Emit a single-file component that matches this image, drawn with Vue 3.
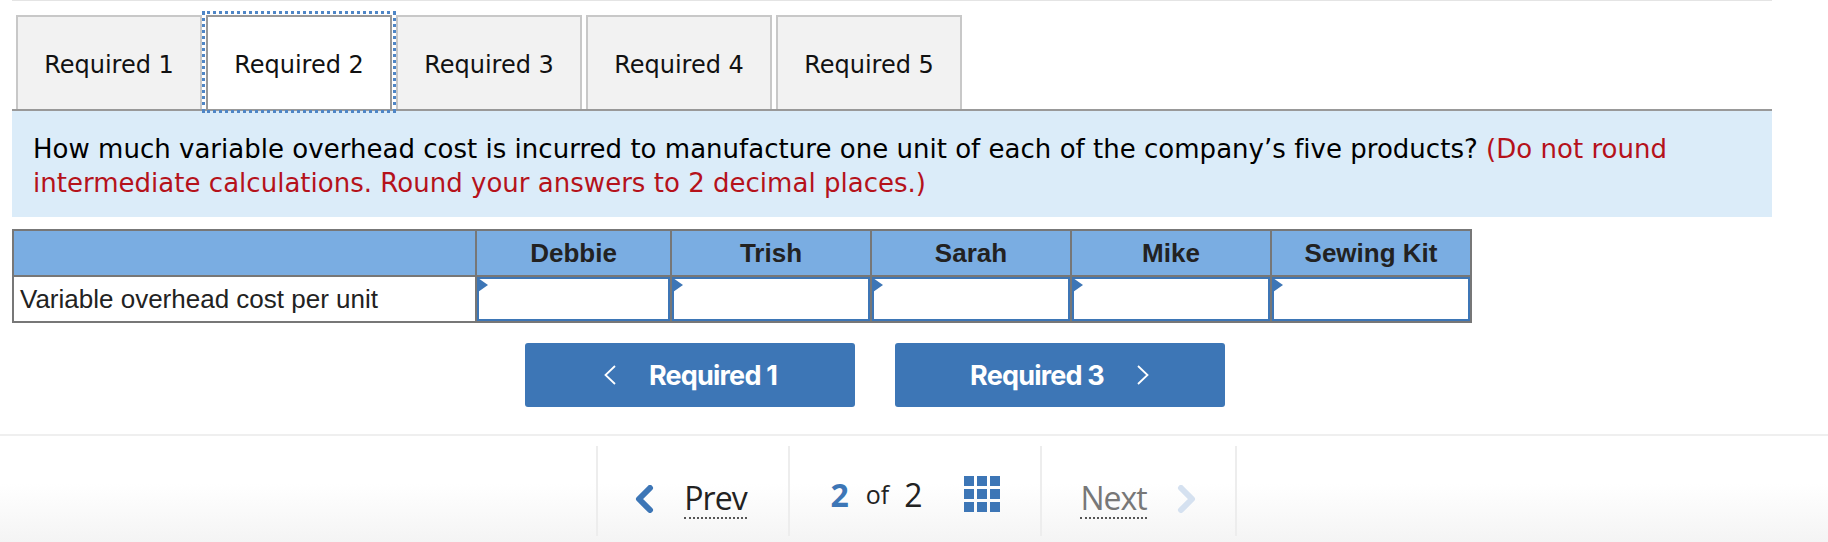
<template>
  <div class="page">
    <div class="content">
      <div class="tabs">
        <button
          v-for="n in 5"
          :key="n"
          class="tab"
          :class="{ active: n === 2 }"
          type="button"
        >
          Required {{ n }}
        </button>
      </div>

      <div class="question">
        How much variable overhead cost is incurred to manufacture one unit of each of the company’s five products?
        <span class="hint">(Do not round intermediate calculations. Round your answers to 2 decimal places.)</span>
      </div>

      <table class="answers">
        <colgroup>
          <col class="col-label" />
          <col v-for="(p, i) in products" :key="p" :class="i === 0 ? 'col-first' : 'col-rest'" />
        </colgroup>
        <thead>
          <tr>
            <th></th>
            <th v-for="p in products" :key="p">{{ p }}</th>
          </tr>
        </thead>
        <tbody>
          <tr>
            <td class="row-label">Variable overhead cost per unit</td>
            <td v-for="p in products" :key="p" class="cell">
              <span class="marker"></span>
              <input class="cell-input" type="text" />
            </td>
          </tr>
        </tbody>
      </table>

      <div class="req-nav">
        <button class="req-btn" type="button">
          <svg class="req-chevron" viewBox="0 0 14 20" width="14" height="20">
            <path d="M12 1 L2.5 10 L12 19" fill="none" stroke="#fff" stroke-width="1.8" />
          </svg>
          Required 1
        </button>
        <button class="req-btn" type="button">
          Required 3
          <svg class="req-chevron" viewBox="0 0 14 20" width="14" height="20">
            <path d="M2 1 L11.5 10 L2 19" fill="none" stroke="#fff" stroke-width="1.8" />
          </svg>
        </button>
      </div>
    </div>

    <div class="footer">
      <div class="pager">
        <div class="pager-item prev">
          <svg viewBox="0 0 20 28" width="20" height="28">
            <path d="M16 3 L5 14 L16 25" fill="none" stroke="#3d76b6" stroke-width="6" stroke-linecap="round" stroke-linejoin="round" />
          </svg>
          <span class="pager-link">Prev</span>
        </div>
        <div class="pager-item count">
          <span class="current">2</span>
          <span class="of">of</span>
          <span class="total">2</span>
          <span class="grid-icon">
            <i v-for="n in 9" :key="n"></i>
          </span>
        </div>
        <div class="pager-item next">
          <span class="pager-link">Next</span>
          <svg viewBox="0 0 20 28" width="20" height="28">
            <path d="M4 3 L15 14 L4 25" fill="none" stroke="#d5e1f0" stroke-width="6" stroke-linecap="round" stroke-linejoin="round" />
          </svg>
        </div>
      </div>
    </div>
  </div>
</template>

<script setup>
const products = ['Debbie', 'Trish', 'Sarah', 'Mike', 'Sewing Kit']
</script>

<style>
html,
body {
  margin: 0;
  background: #fff;
  overflow: hidden;
}
</style>

<style scoped>
.page {
  width: 1828px;
  height: 542px;
  display: flex;
  flex-direction: column;
  overflow: hidden;
}

.content {
  margin: 0 56px 0 12px;
  border-top: 1px solid #e4e4e4;
  flex: 0 0 433px;
}

/* TABS */
.tabs {
  display: flex;
  align-items: flex-start;
  gap: 4px;
  padding: 14px 0 0 4px;
  border-bottom: 2px solid #999;
  height: 94px;
}

.tab {
  width: 186px;
  height: 94px;
  box-sizing: border-box;
  border: 2px solid #c8c8c8;
  border-bottom: none;
  background: #f2f2f2;
  color: #111;
  font-family: "DejaVu Sans", Verdana, sans-serif;
  font-size: 24px;
  padding: 3px 0 0;
}

.tab.active {
  background: #fff;
  border-color: #999;
  outline: 3px dotted #4f86c6;
  outline-offset: 1px;
  position: relative;
}

/* PERGUNTA */
.question {
  background: #dbecf9;
  height: 106px;
  box-sizing: border-box;
  padding: 21px 20px 0 21px;
  font-family: "DejaVu Sans", Verdana, sans-serif;
  font-size: 26px;
  letter-spacing: 0.02px;
  line-height: 34px;
  color: #000;
}

.hint {
  color: #b5121b;
}

/* TABELA */
.answers {
  margin-top: 12px;
  border-collapse: collapse;
  table-layout: fixed;
  width: 1458px;
  font-family: "Liberation Sans", Arial, sans-serif;
  font-size: 26px;
  color: #222;
}

.col-label {
  width: 463px;
}

.col-first {
  width: 195px;
}

.col-rest {
  width: 200px;
}

.answers th {
  height: 44px;
  padding: 0;
  background: #7aade2;
  border: 2px solid #777;
  font-weight: bold;
}

.answers td {
  height: 44px;
  padding: 0;
  border: 2px solid #777;
}

.row-label {
  padding-left: 6px !important;
}

.cell {
  position: relative;
}

.cell-input {
  display: block;
  width: 100%;
  height: 44px;
  box-sizing: border-box;
  border: 2px solid #3d76b6;
  background: #fff;
  outline: none;
}

.marker {
  position: absolute;
  left: 1px;
  top: 1px;
  border-left: 10px solid #3d76b6;
  border-top: 7px solid transparent;
  border-bottom: 7px solid transparent;
}

/* BOTOES */
.req-nav {
  display: flex;
  justify-content: flex-start;
  gap: 40px;
  margin: 20px 0 0 513px;
}

.req-btn {
  width: 330px;
  height: 64px;
  display: flex;
  align-items: center;
  justify-content: center;
  gap: 32px;
  border: none;
  border-radius: 3px;
  background: #3d76b6;
  color: #fff;
  font-family: Inter, sans-serif;
  font-size: 27px;
  font-weight: 700;
  letter-spacing: -0.8px;
}

/* RODAPE */
.footer {
  flex: 1;
  border-top: 2px solid #efefef;
  background: linear-gradient(#fff 45%, #f4f4f4);
  padding-top: 10px;
}

.pager {
  display: flex;
  height: 90px;
  margin-left: 596px;
  width: 641px;
  border-left: 2px solid #ededed;
  border-right: 2px solid #ededed;
  box-sizing: border-box;
}

.pager-item {
  display: flex;
  align-items: center;
  justify-content: center;
  box-sizing: border-box;
  font-family: "Open Sans", sans-serif;
  color: #222;
}

.prev {
  width: 192px;
  gap: 30px;
  border-right: 2px solid #ededed;
  padding: 15px 5px 0 0;
}

.count {
  width: 252px;
  border-right: 2px solid #ededed;
  padding-top: 6px;
}

.next {
  flex: 1;
  gap: 30px;
  color: #777;
  padding-top: 15px;
}

.pager-link {
  font-size: 32px;
  letter-spacing: -1px;
  line-height: 38px;
  border-bottom: 2px dotted #555;
}

.current {
  font-size: 32px;
  font-weight: 700;
  color: #3d76b6;
}

.of {
  font-size: 25px;
  margin: 0 15px 0 17px;
}

.total {
  font-size: 32px;
}

.grid-icon {
  display: grid;
  grid-template-columns: repeat(3, 10px);
  grid-auto-rows: 10px;
  gap: 3px;
  margin-left: 41px;
}

.grid-icon i {
  background: #3d76b6;
}
</style>
